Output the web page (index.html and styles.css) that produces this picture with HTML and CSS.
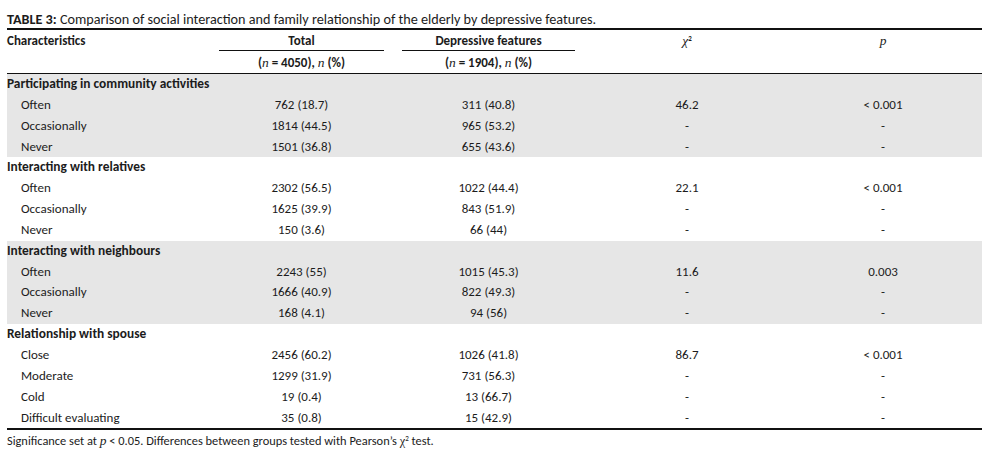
FILE: index.html
```html
<!DOCTYPE html>
<html lang="en">
<head>
<meta charset="utf-8">
<title>Table 3</title>
<link rel="stylesheet" href="styles.css">
</head>
<body>
<div class="page">
  <p class="caption"><b>TABLE 3:</b> Comparison of social interaction and family relationship of the elderly by depressive features.</p>
  <table class="data">
    <colgroup>
      <col class="c1"><col class="c2"><col class="c3"><col class="c4"><col class="c5">
    </colgroup>
    <thead>
      <tr class="h1">
        <th class="left">Characteristics</th>
        <th><div class="span-line">Total</div></th>
        <th><div class="span-line">Depressive features</div></th>
        <th><span class="math">χ</span><sup class="sup">2</sup></th>
        <th class="pcol"><span class="math">p</span></th>
      </tr>
      <tr class="h2">
        <th></th>
        <th>(<span class="math">n</span> = 4050), <span class="math">n</span> (%)</th>
        <th>(<span class="math">n</span> = 1904), <span class="math">n</span> (%)</th>
        <th></th>
        <th></th>
      </tr>
    </thead>
    <tbody class="shade">
      <tr class="group"><td colspan="5">Participating in community activities</td></tr>
      <tr><td class="sub">Often</td><td>762 (18.7)</td><td>311 (40.8)</td><td>46.2</td><td class="pcol">&lt; 0.001</td></tr>
      <tr><td class="sub">Occasionally</td><td>1814 (44.5)</td><td>965 (53.2)</td><td>-</td><td class="pcol">-</td></tr>
      <tr><td class="sub">Never</td><td>1501 (36.8)</td><td>655 (43.6)</td><td>-</td><td class="pcol">-</td></tr>
    </tbody>
    <tbody>
      <tr class="group"><td colspan="5">Interacting with relatives</td></tr>
      <tr><td class="sub">Often</td><td>2302 (56.5)</td><td>1022 (44.4)</td><td>22.1</td><td class="pcol">&lt; 0.001</td></tr>
      <tr><td class="sub">Occasionally</td><td>1625 (39.9)</td><td>843 (51.9)</td><td>-</td><td class="pcol">-</td></tr>
      <tr><td class="sub">Never</td><td>150 (3.6)</td><td>66 (44)</td><td>-</td><td class="pcol">-</td></tr>
    </tbody>
    <tbody class="shade">
      <tr class="group"><td colspan="5">Interacting with neighbours</td></tr>
      <tr><td class="sub">Often</td><td>2243 (55)</td><td>1015 (45.3)</td><td>11.6</td><td class="pcol">0.003</td></tr>
      <tr><td class="sub">Occasionally</td><td>1666 (40.9)</td><td>822 (49.3)</td><td>-</td><td class="pcol">-</td></tr>
      <tr><td class="sub">Never</td><td>168 (4.1)</td><td>94 (56)</td><td>-</td><td class="pcol">-</td></tr>
    </tbody>
    <tbody class="last">
      <tr class="group"><td colspan="5">Relationship with spouse</td></tr>
      <tr><td class="sub">Close</td><td>2456 (60.2)</td><td>1026 (41.8)</td><td>86.7</td><td class="pcol">&lt; 0.001</td></tr>
      <tr><td class="sub">Moderate</td><td>1299 (31.9)</td><td>731 (56.3)</td><td>-</td><td class="pcol">-</td></tr>
      <tr><td class="sub">Cold</td><td>19 (0.4)</td><td>13 (66.7)</td><td>-</td><td class="pcol">-</td></tr>
      <tr><td class="sub">Difficult evaluating</td><td>35 (0.8)</td><td>15 (42.9)</td><td>-</td><td class="pcol">-</td></tr>
    </tbody>
  </table>
  <p class="note">Significance set at <span class="math">p</span> &lt; 0.05. Differences between groups tested with Pearson’s <span class="chi">χ</span><sup class="sup">2</sup> test.</p>
</div>
</body>
</html>
```

FILE: styles.css
```css
html, body {
  margin: 0;
  padding: 0;
  background: #ffffff;
}

body {
  font-family: Carlito, Calibri, Lato, "Liberation Sans", sans-serif;
  color: #1c1c1c;
  font-size: 13px;
}

.page {
  padding: 11px 13px 0 7px;
  width: 975px;
}

.caption {
  margin: 0;
  font-size: 14.2px;
  line-height: 17px;
  height: 17px;
  white-space: nowrap;
}

.caption b {
  font-weight: 700;
}

.data {
  width: 975px;
  border-collapse: collapse;
  table-layout: fixed;
  border-top: 2px solid #111;
  border-bottom: 2px solid #111;
}

.c1 { width: 203px; }
.c2 { width: 183px; }
.c3 { width: 191px; }
.c4 { width: 206px; }
.c5 { width: 192px; }

th, td {
  padding: 0;
  text-align: center;
  white-space: nowrap;
}

thead th {
  font-weight: 700;
}

.h1 th {
  height: 22px;
  line-height: 22px;
  vertical-align: top;
}

.h1 th.left {
  text-align: left;
}

.span-line {
  margin: 0 9px;
  height: 20px;
  line-height: 22px;
  border-bottom: 1px solid #111;
}

.h2 th {
  height: 21px;
  line-height: 21px;
  border-bottom: 1px solid #111;
}

.math {
  font-family: "Liberation Serif", "DejaVu Serif", serif;
  font-style: italic;
  font-weight: 400;
  font-size: 13.5px;
}

.chi {
  font-family: "Liberation Serif", serif;
  font-style: normal;
}

.sup {
  font-size: 7px;
  vertical-align: top;
  line-height: 1;
  position: relative;
  top: 2px;
}

.h1 .sup {
  top: 5px;
}

td {
  height: 20.85px;
  line-height: 20.85px;
}

.shade td {
  background: #e6e6e6;
}

.group td {
  text-align: left;
  font-weight: 700;
  font-size: 13.4px;
}

td.sub {
  text-align: left;
  padding-left: 14px;
}

.pcol {
  padding-right: 6px;
}

.note {
  margin: 3px 0 0 0;
  font-size: 12.4px;
  line-height: 16px;
}
```
